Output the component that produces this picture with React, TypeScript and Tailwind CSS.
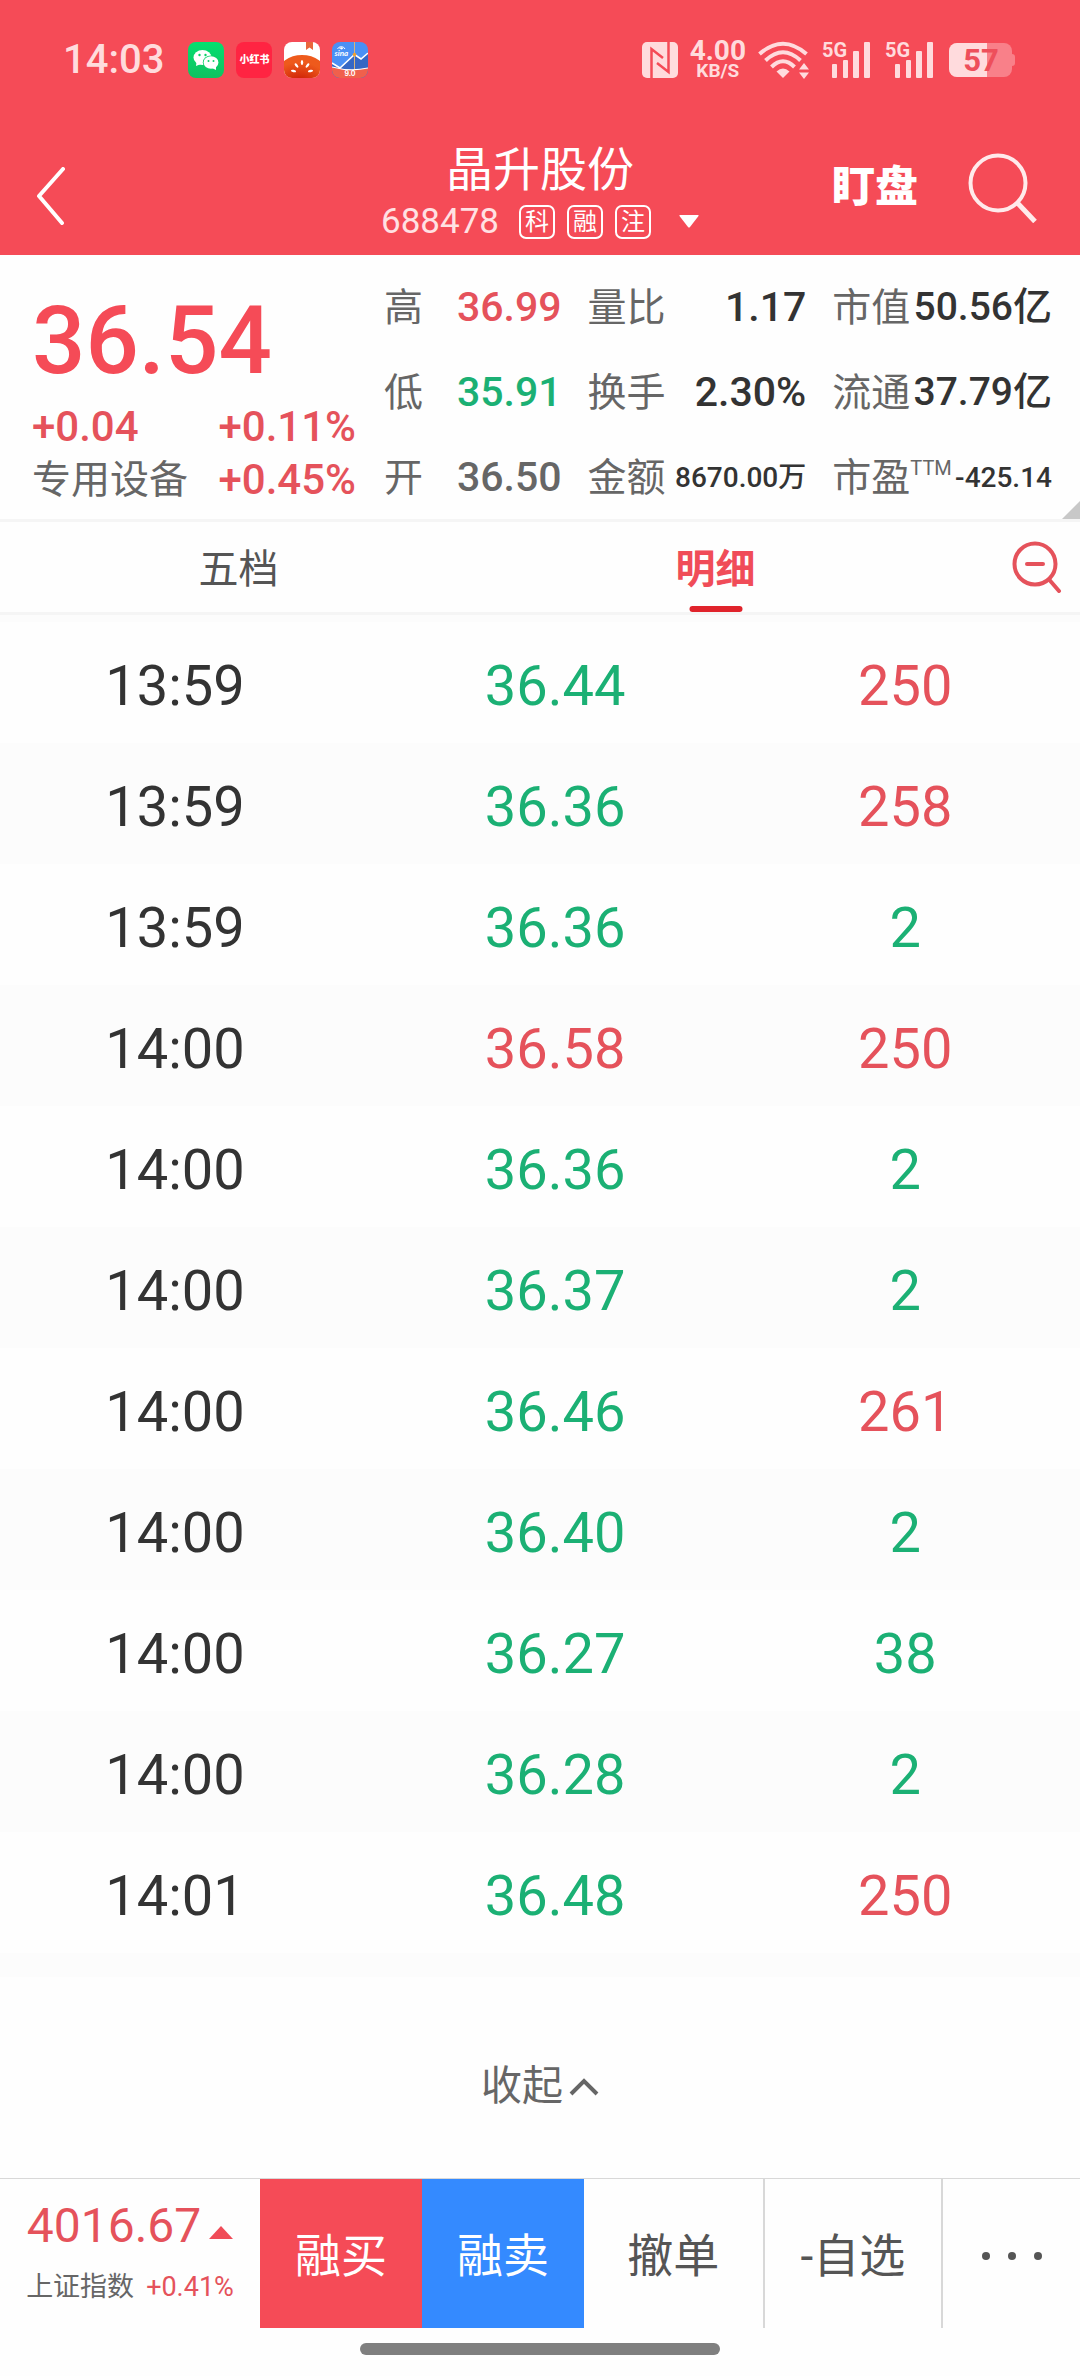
import React from "react";

type Tone = "up" | "down" | "flat" | "dark";

const toneClass: Record<Tone, string> = {
  up: "text-[#e5525b]",
  down: "text-[#1bb074]",
  flat: "text-[#666666]",
  dark: "text-[#333333]",
};

const trades: { time: string; price: string; priceTone: Tone; volume: string; volumeTone: Tone }[] = [
  { time: "13:59", price: "36.44", priceTone: "down", volume: "250", volumeTone: "up" },
  { time: "13:59", price: "36.36", priceTone: "down", volume: "258", volumeTone: "up" },
  { time: "13:59", price: "36.36", priceTone: "down", volume: "2", volumeTone: "down" },
  { time: "14:00", price: "36.58", priceTone: "up", volume: "250", volumeTone: "up" },
  { time: "14:00", price: "36.36", priceTone: "down", volume: "2", volumeTone: "down" },
  { time: "14:00", price: "36.37", priceTone: "down", volume: "2", volumeTone: "down" },
  { time: "14:00", price: "36.46", priceTone: "down", volume: "261", volumeTone: "up" },
  { time: "14:00", price: "36.40", priceTone: "down", volume: "2", volumeTone: "down" },
  { time: "14:00", price: "36.27", priceTone: "down", volume: "38", volumeTone: "down" },
  { time: "14:00", price: "36.28", priceTone: "down", volume: "2", volumeTone: "down" },
  { time: "14:01", price: "36.48", priceTone: "down", volume: "250", volumeTone: "up" },
];

function WeChatIcon() {
  return (
    <svg width="36" height="36" viewBox="0 0 36 36" aria-hidden="true">
      <defs>
        <linearGradient id="wechat" x1="0" y1="0" x2="0" y2="1">
          <stop offset="0" stopColor="#04df70" />
          <stop offset="1" stopColor="#10c160" />
        </linearGradient>
      </defs>
      <rect width="36" height="36" rx="8" fill="url(#wechat)" />
      <ellipse cx="14.5" cy="15.5" rx="9" ry="7.5" fill="#fff" />
      <path d="M8.5 20 L8 24 L13 22 Z" fill="#fff" />
      <ellipse cx="23" cy="20.500" rx="8.200" ry="7" fill="#0dd067" />
      <ellipse cx="23" cy="20.500" rx="7.400" ry="6.200" fill="#fff" />
      <path d="M24 26 L28 28 L28 24 Z" fill="#fff" />
      <circle cx="11.500" cy="13" r="1.200" fill="#0dd067" />
      <circle cx="17.500" cy="13" r="1.200" fill="#0dd067" />
      <circle cx="20.500" cy="19" r="1" fill="#0dd067" />
      <circle cx="25.500" cy="19" r="1" fill="#0dd067" />
    </svg>
  );
}

function TomatoIcon() {
  return (
    <svg width="36" height="36" viewBox="0 0 36 36" aria-hidden="true">
      <defs>
        <clipPath id="tomato-clip">
          <rect width="36" height="36" rx="8" />
        </clipPath>
        <radialGradient id="tomato" cx="0.45" cy="0.8" r="0.6">
          <stop offset="0" stopColor="#c81400" />
          <stop offset="1" stopColor="#ee5a1c" />
        </radialGradient>
      </defs>
      <g clipPath="url(#tomato-clip)">
        <rect width="36" height="36" fill="#fff" />
        <ellipse cx="18" cy="31" rx="24" ry="18" fill="url(#tomato)" />
        <path d="M22 0 H29 V8 L25.500 5.500 L22 8 Z" fill="#e9663c" />
        <g fill="#fff">
          <ellipse cx="18" cy="20.500" rx="1.200" ry="2.600" />
          <ellipse cx="12.500" cy="23.500" rx="1.200" ry="2.600" transform="rotate(-40 12.500 23.500)" />
          <ellipse cx="23.500" cy="23.500" rx="1.200" ry="2.600" transform="rotate(40 23.500 23.500)" />
          <ellipse cx="9.500" cy="29" rx="1.200" ry="2.600" transform="rotate(-80 9.500 29)" />
          <ellipse cx="26.500" cy="29" rx="1.200" ry="2.600" transform="rotate(80 26.500 29)" />
        </g>
      </g>
    </svg>
  );
}

function SinaIcon() {
  return (
    <svg width="36" height="36" viewBox="0 0 36 36" className="overflow-visible" aria-hidden="true">
      <defs>
        <clipPath id="sina-clip">
          <rect width="36" height="36" rx="8" />
        </clipPath>
      </defs>
      <g clipPath="url(#sina-clip)">
        <rect width="36" height="36" fill="#4a90f5" />
        <path d="M0 22 L8 26 L22.500 12.500 L29 17 L36 10 V36 H0 Z" fill="#3567c4" />
        <path d="M0 21 L8 26 L22.500 12.500 L29 17 L36 11" fill="none" stroke="#fff" strokeWidth="1.600" />
        <path d="M0 25 Q18 30 36 26 V36 H0 Z" fill="#f0604c" />
        <path d="M0 25 Q18 30 36 26" fill="none" stroke="#fff" strokeWidth="1.200" />
        <path d="M22.500 0 V27" stroke="#d9b27a" strokeWidth="1" />
        <circle cx="22.500" cy="12.500" r="1.800" fill="#f0a030" />
        <path d="M5.500 7 A4 3.500 0 0 1 13 7 M7.500 7 A2 2 0 0 1 11 7" fill="none" stroke="#fff" strokeWidth="1" />
        <circle cx="9.500" cy="6.500" r="1" fill="#fff" />
      </g>
      <text x="2.500" y="14" fontSize="8" fontWeight="700" fontStyle="italic" fill="#fff" fontFamily="Lato, sans-serif">sina</text>
      <text x="18" y="34" fontSize="7" fontWeight="700" textAnchor="middle" fill="#fff" fontFamily="Inter, sans-serif">9.0</text>
    </svg>
  );
}

function NfcIcon() {
  return (
    <svg width="36" height="36" viewBox="0 0 36 36" aria-hidden="true">
      <rect width="36" height="36" rx="5" fill="#ffdbdd" />
      <path d="M9.500 36 V7 L21 16 M26.500 0 V30 L15 21" fill="none" stroke="#f54b57" strokeWidth="2.500" />
    </svg>
  );
}

function WifiIcon() {
  return (
    <svg width="52" height="38" viewBox="0 0 52 38" aria-hidden="true">
      <g fill="none" stroke="#ffdbdd" strokeWidth="4">
        <path d="M1.500 13 Q25 -7.500 48.500 13" />
        <path d="M7.500 19.500 Q25 3 42.500 19.500" />
        <path d="M13.500 26 Q25 14.500 36.500 26" />
      </g>
      <path d="M18.500 30.500 Q25 24.500 31.500 30.500 L25 37 Z" fill="#ffdbdd" />
      <path d="M46 22 L51 28.500 H41 Z M46 38 L51 31.500 H41 Z" fill="#ffdbdd" />
    </svg>
  );
}

function Signal() {
  return (
    <svg width="48" height="38" viewBox="0 0 48 38" className="overflow-visible" role="img" aria-label="5G">
      <text x="0" y="16" fontSize="20" fontWeight="700" fill="#ffdbdd" fontFamily="Roboto, sans-serif">5G</text>
      <g fill="#ffdbdd">
        <rect x="10" y="23" width="5" height="14" rx="1" />
        <rect x="21" y="19" width="5" height="18" rx="1" />
        <rect x="31" y="10" width="6" height="27" rx="1" />
        <rect x="42" y="1" width="6" height="36" rx="1" />
      </g>
    </svg>
  );
}

function Battery() {
  return (
    <svg width="66" height="34" viewBox="0 0 66 34" className="overflow-visible" role="img" aria-label="57%">
      <defs>
        <clipPath id="battery-clip">
          <rect width="63" height="34" rx="8" />
        </clipPath>
      </defs>
      <g clipPath="url(#battery-clip)">
        <rect width="63" height="34" fill="#f98089" />
        <rect width="38" height="34" fill="#ffdbdd" />
      </g>
      <path d="M63 11 Q66 11 66 14 V20 Q66 23 63 23 Z" fill="#f98089" />
      <text x="32" y="28" fontSize="31" fontWeight="700" textAnchor="middle" fill="#ee4f5b" fontFamily="Roboto, sans-serif">57</text>
    </svg>
  );
}

function StatusBar() {
  return (
    <div className="flex h-[120px] items-center justify-between pl-[63px] pr-[65px] text-[#ffdbdd]">
      <div className="flex items-center gap-3">
        <span className="mr-3 text-[40px] font-medium leading-none">14:03</span>
        <WeChatIcon />
        <span className="flex size-9 items-center justify-center rounded-lg bg-[#ff2442] text-[10px] font-black leading-none text-white">
          小红书
        </span>
        <TomatoIcon />
        <SinaIcon />
      </div>
      <div className="flex items-center">
        <NfcIcon />
        <div className="ml-3 mr-3 flex flex-col items-center font-bold">
          <span className="text-[28px] leading-[22px]">4.00</span>
          <span className="text-[19px] leading-[18px]">KB/S</span>
        </div>
        <WifiIcon />
        <span className="ml-3 mr-[15px]"><Signal /></span>
        <Signal />
        <span className="ml-4"><Battery /></span>
      </div>
    </div>
  );
}

function Badge({ children }: { children: React.ReactNode }) {
  return (
    <span className="flex h-[34px] w-9 items-center justify-center rounded-[7px] border-2 border-white text-[24px] leading-none text-white">
      {children}
    </span>
  );
}

function TitleBar() {
  return (
    <div className="grid h-[135px] grid-cols-[1fr_auto_1fr] items-center text-white">
      <button type="button" aria-label="返回" className="ml-9 mt-4 w-8">
        <svg width="32" height="58" viewBox="0 0 32 58" fill="none" stroke="currentColor" strokeWidth="4" strokeLinecap="round" strokeLinejoin="round">
          <path d="M27 2 L3 29 L26 56" />
        </svg>
      </button>
      <div className="flex flex-col items-center pt-1.5">
        <h1 className="text-[47px] font-normal leading-[56px]">晶升股份</h1>
        <div className="mt-1.5 flex h-9 items-center gap-3">
          <span className="mr-2 text-[35px] leading-none text-[#ffe1e3]">688478</span>
          <Badge>科</Badge>
          <Badge>融</Badge>
          <Badge>注</Badge>
          <button type="button" aria-label="展开" className="ml-4">
            <svg width="20" height="13" viewBox="0 0 20 13" fill="currentColor">
              <path d="M1 0 H19 Q20 0 19.500 1 L11 12 Q10 13 9 12 L0.500 1 Q0 0 1 0 Z" />
            </svg>
          </button>
        </div>
      </div>
      <div className="flex items-center justify-end gap-[50px] pr-[42px]">
        <button type="button" className="text-[43px] font-black leading-none">盯盘</button>
        <button type="button" aria-label="搜索">
          <svg width="70" height="70" viewBox="0 0 70 70" fill="none" stroke="#ffeaeb" strokeWidth="4">
            <circle cx="30" cy="30" r="27.500" />
            <path d="M48.500 49 L67 68.500" strokeWidth="5" />
          </svg>
        </button>
      </div>
    </div>
  );
}

function Metric({ label, sup, value, tone, size }: { label: string; sup?: string; value: string; tone: Tone; size: string }) {
  return (
    <div className="flex h-[85px] items-center justify-between whitespace-nowrap">
      <dt className="flex items-start text-[39px] leading-[44px] text-[#666666]">
        {label}
        {sup && <sup className="top-0 text-[20px] leading-6">{sup}</sup>}
      </dt>
      <dd className={`font-medium leading-none ${size} ${toneClass[tone]}`}>{value}</dd>
    </div>
  );
}

function QuotePanel() {
  return (
    <section className="relative flex items-start border-b-[3px] border-[#f5f5f5] pl-8 pr-7 pt-[10px]">
      <div className="w-[324px] pt-[26px]">
        <div className="text-[94px] font-medium leading-[100px] text-[#f54b57]">36.54</div>
        <div className="mt-[10px] flex h-[52px] items-center justify-between text-[42px] font-medium leading-none text-[#e5525b]">
          <span>+0.04</span>
          <span>+0.11%</span>
        </div>
        <div className="flex h-[54px] items-center justify-between whitespace-nowrap leading-none">
          <span className="text-[39px] text-[#666666]">专用设备</span>
          <span className="text-[42px] font-medium text-[#e5525b]">+0.45%</span>
        </div>
      </div>
      <dl className="ml-7 -mb-px grid flex-1 grid-cols-[177fr_218fr_219fr] gap-x-[26px]">
        <Metric label="高" value="36.99" tone="up" size="text-[41px]" />
        <Metric label="量比" value="1.17" tone="dark" size="text-[41px]" />
        <Metric label="市值" value="50.56亿" tone="dark" size="text-[39px]" />
        <Metric label="低" value="35.91" tone="down" size="text-[41px]" />
        <Metric label="换手" value="2.30%" tone="dark" size="text-[41px]" />
        <Metric label="流通" value="37.79亿" tone="dark" size="text-[39px]" />
        <Metric label="开" value="36.50" tone="flat" size="text-[41px]" />
        <Metric label="金额" value="8670.00万" tone="dark" size="text-[28px]" />
        <Metric label="市盈" sup="TTM" value="-425.14" tone="dark" size="text-[28px]" />
      </dl>
      <svg className="absolute bottom-0 right-0" width="18" height="18" viewBox="0 0 18 18" aria-hidden="true">
        <path d="M18 0 V18 H0 Z" fill="#c8c8c8" />
      </svg>
    </section>
  );
}

function Tabs() {
  return (
    <div className="flex h-[93px] items-stretch border-b-[3px] border-[#f5f5f5]">
      <div role="tablist" className="flex flex-1">
        <button type="button" role="tab" aria-selected="false" className="flex-1 pt-1.5 text-[40px] leading-none text-[#555555]">
          五档
        </button>
        <button type="button" role="tab" aria-selected="true" className="relative flex-1 pt-1.5 text-[40px] font-bold leading-none text-[#f04c58]">
          明细
          <span className="absolute bottom-0 left-1/2 h-1.5 w-[53px] -translate-x-1/2 rounded-full bg-[#e0232b]" />
        </button>
      </div>
      <button type="button" aria-label="缩小" className="flex w-[126px] items-center justify-end pr-[18px]">
        <svg width="50" height="52" viewBox="0 0 50 52" fill="none" stroke="#e5525b" strokeWidth="4" strokeLinecap="round">
          <circle cx="23" cy="23" r="20.500" />
          <path d="M15 23 H31" />
          <path d="M37.500 39 L47 50" />
        </svg>
      </button>
    </div>
  );
}

function TradeTable() {
  return (
    <div className="border-b-[24px] border-t-[7px] border-[#fcfcfc]">
      <table className="w-full table-fixed border-collapse text-center text-[56px] leading-none">
        <colgroup>
          <col className="w-[32.400%]" />
          <col className="w-[38%]" />
          <col />
        </colgroup>
        <tbody>
          {trades.map((t, i) => (
            <tr key={i} className="h-[121px] even:bg-[#fcfcfc]">
              <td className="p-0 pt-1.5 text-[#333333]">{t.time}</td>
              <td className={`p-0 pt-1.5 ${toneClass[t.priceTone]}`}>{t.price}</td>
              <td className={`p-0 pr-[30px] pt-1.5 ${toneClass[t.volumeTone]}`}>{t.volume}</td>
            </tr>
          ))}
        </tbody>
      </table>
    </div>
  );
}

function BottomBar() {
  return (
    <footer>
      <div className="flex h-[150px] items-stretch whitespace-nowrap border-t border-[#d8d8d8] text-[46px] leading-none text-[#555555]">
        <a href="#index" className="flex w-[260px] flex-col items-center pt-[18px]">
          <span className="flex items-center gap-2 text-[48px] leading-[58px] text-[#e5525b]">
            4016.67
            <svg className="mt-3" width="24" height="13" viewBox="0 0 24 13" aria-hidden="true">
              <path d="M12 0 L24 13 H0 Z" fill="#f04c58" />
            </svg>
          </span>
          <span className="mt-3 flex items-center gap-3 text-[27px] leading-10 text-[#666666]">
            上证指数
            <span className="text-[27px] text-[#e5525b]">+0.41%</span>
          </span>
        </a>
        <button type="button" className="w-[162px] bg-[#f54b57] pt-1 text-white">融买</button>
        <button type="button" className="w-[162px] bg-[#348aff] pt-1 text-white">融卖</button>
        <button type="button" className="flex-[180] border-r-2 border-[#d8d8d8] pt-1">撤单</button>
        <button type="button" className="flex-[178] border-r-2 border-[#d8d8d8] pt-1">-自选</button>
        <button type="button" aria-label="更多" className="flex flex-[138] items-center justify-center pt-1">
          <svg width="60" height="8" viewBox="0 0 60 8" fill="#555555">
            <circle cx="4" cy="4" r="4" />
            <circle cx="30" cy="4" r="4" />
            <circle cx="56" cy="4" r="4" />
          </svg>
        </button>
      </div>
      <div className="flex h-12 justify-center pt-[15px]">
        <div className="h-3 w-1/3 rounded-full bg-[#7f7f7f]" />
      </div>
    </footer>
  );
}

export default function App() {
  return (
    <div className="flex min-h-screen flex-col bg-[#fefefe] font-[Roboto,'Noto_Sans_CJK_SC',sans-serif]">
      <header className="bg-[#f54b57]">
        <StatusBar />
        <TitleBar />
      </header>
      <main className="flex flex-1 flex-col">
        <QuotePanel />
        <Tabs />
        <TradeTable />
        <button type="button" className="flex flex-1 items-center justify-center gap-1.5 pt-[18px] text-[41px] leading-none text-[#666666]">
          收起
          <svg width="30" height="18" viewBox="0 0 30 18" fill="none" stroke="currentColor" strokeWidth="4">
            <path d="M2 16 L15 3 L28 16" />
          </svg>
        </button>
      </main>
      <BottomBar />
    </div>
  );
}
